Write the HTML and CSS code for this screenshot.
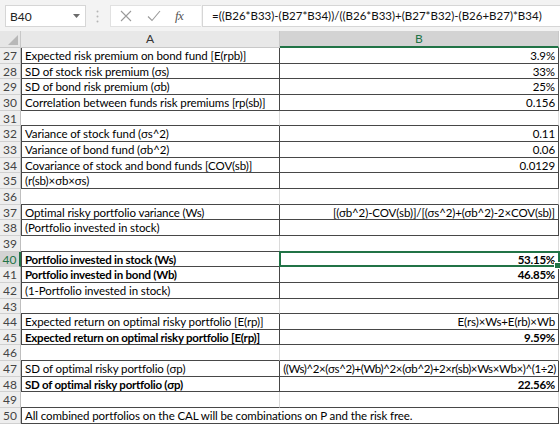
FILE: index.html
```html
<!DOCTYPE html>
<html>
<head>
<meta charset="utf-8">
<link rel="stylesheet" href="styles.css">
</head>
<body>
<div class="app">
  <div class="toolbar">
    <div class="namebox">
      <span class="ref">B40</span>
      <svg class="caret" width="7" height="4" viewBox="0 0 7 4"><path d="M0 0H7L3.5 4Z" fill="#6b6b6b"/></svg>
    </div>
    <svg class="dots" width="3" height="13" viewBox="0 0 3 13"><circle cx="1.5" cy="1.5" r="1" fill="#b5b5b5"/><circle cx="1.5" cy="6.5" r="1" fill="#b5b5b5"/><circle cx="1.5" cy="11.5" r="1" fill="#b5b5b5"/></svg>
    <div class="fxbtns">
      <svg class="btn" width="12" height="12" viewBox="0 0 12 12"><path d="M1 1L11 11M11 1L1 11" stroke="#9a9a9a" stroke-width="1.1" fill="none"/></svg>
      <svg class="btn" width="14" height="12" viewBox="0 0 14 12"><path d="M1 6.5L5 10.5L13 1" stroke="#9a9a9a" stroke-width="1.1" fill="none"/></svg>
      <span class="fx">fx</span>
    </div>
    <div class="formula">=((B26*B33)-(B27*B34))/((B26*B33)+(B27*B32)-(B26+B27)*B34)</div>
  </div>

  <div class="sheet">
    <div class="corner"><svg width="10" height="10" viewBox="0 0 10 10"><path d="M10 0V10H0Z" fill="#b8b8b8"/></svg></div>
    <div class="colh">A</div>
    <div class="colh sel">B</div>

    <div class="rh">27</div><div class="c a b">Expected risk premium on bond fund [E(rpb)]</div><div class="c v b">3.9%</div>
    <div class="rh">28</div><div class="c a b">SD of stock risk premium (σs)</div><div class="c v b">33%</div>
    <div class="rh">29</div><div class="c a b">SD of bond risk premium (σb)</div><div class="c v b">25%</div>
    <div class="rh">30</div><div class="c a b">Correlation between funds risk premiums [rp(sb)]</div><div class="c v b">0.156</div>
    <div class="rh">31</div><div class="c a"></div><div class="c v"></div>
    <div class="rh">32</div><div class="c a b">Variance of stock fund (σs^2)</div><div class="c v b">0.11</div>
    <div class="rh">33</div><div class="c a b">Variance of bond fund (σb^2)</div><div class="c v b">0.06</div>
    <div class="rh">34</div><div class="c a b">Covariance of stock and bond funds [COV(sb)]</div><div class="c v b">0.0129</div>
    <div class="rh">35</div><div class="c a b">(r(sb)×σb×σs)</div><div class="c v b"></div>
    <div class="rh">36</div><div class="c a"></div><div class="c v"></div>
    <div class="rh">37</div><div class="c a b">Optimal risky portfolio variance (Ws)</div><div class="c v b">[(σb^2)-COV(sb)]/[(σs^2)+(σb^2)-2×COV(sb)]</div>
    <div class="rh">38</div><div class="c a b">(Portfolio invested in stock)</div><div class="c v b"></div>
    <div class="rh">39</div><div class="c a"></div><div class="c v"></div>
    <div class="rh rsel">40</div><div class="c a b bold asel">Portfolio invested in stock (Ws)</div><div class="c v b bold active">53.15%</div>
    <div class="rh">41</div><div class="c a b bold">Portfolio invested in bond (Wb)</div><div class="c v b bold">46.85%</div>
    <div class="rh">42</div><div class="c a b">(1-Portfolio invested in stock)</div><div class="c v b"></div>
    <div class="rh">43</div><div class="c a"></div><div class="c v"></div>
    <div class="rh">44</div><div class="c a b">Expected return on optimal risky portfolio [E(rp)]</div><div class="c v b">E(rs)×Ws+E(rb)×Wb</div>
    <div class="rh">45</div><div class="c a b bold">Expected return on optimal risky portfolio [E(rp)]</div><div class="c v b bold">9.59%</div>
    <div class="rh">46</div><div class="c a"></div><div class="c v"></div>
    <div class="rh">47</div><div class="c a b">SD of optimal risky portfolio (σp)</div><div class="c v b tight">((Ws)^2×(σs^2)+(Wb)^2×(σb^2)+2×r(sb)×Ws×Wb×)^(1÷2)</div>
    <div class="rh">48</div><div class="c a b bold">SD of optimal risky portfolio (σp)</div><div class="c v b bold">22.56%</div>
    <div class="rh">49</div><div class="c a"></div><div class="c v"></div>
    <div class="rh">50</div><div class="c a b span">All combined portfolios on the CAL will be combinations on P and the risk free.</div>
  </div>
</div>
</body>
</html>
```

FILE: styles.css
```css
* { box-sizing: border-box; }
html, body { margin: 0; padding: 0; background: #ffffff; }
body { font-family: Lato, "Open Sans", sans-serif; color: #000; }
.app { width: 560px; height: 425px; overflow: hidden; }

.toolbar {
  height: 31px;
  background: #f3f3f3;
  display: flex;
  align-items: flex-start;
  padding-top: 5px;
  padding-left: 5px;
}
.namebox {
  width: 81px;
  height: 22px;
  background: #fff;
  border: 1px solid #d6d6d6;
  display: flex;
  align-items: center;
  justify-content: space-between;
  padding: 0 5px 0 4px;
  font-size: 12px;
  color: #222;
}
.dots { margin: 5px 0 0 10px; }
.fxbtns {
  margin-left: 11px;
  width: 91px;
  height: 22px;
  background: #fff;
  border: 1px solid #e1e1e1;
  border-right: none;
  display: flex;
  align-items: center;
  padding-left: 9px;
  gap: 15px;
}
.fx {
  font-family: "Liberation Serif", serif;
  font-style: italic;
  font-size: 13px;
  color: #555;
  letter-spacing: -0.5px;
  margin-left: -1px;
}
.formula {
  flex: 1;
  height: 22px;
  margin-left: 1px;
  background: #fff;
  border: 1px solid #d6d6d6;
  border-right: none;
  font-size: 11.5px;
  line-height: 20px;
  padding-left: 9px;
  color: #111;
  white-space: nowrap;
  letter-spacing: 0;
}

.sheet {
  display: grid;
  grid-template-columns: 21px 259px 279px;
  grid-template-rows: 17px;
  grid-auto-rows: 15.667px;
}
.corner {
  background: #e6e6e6;
  border-right: 1px solid #c8c8c8;
  border-bottom: 1px solid #c8c8c8;
  display: flex;
  align-items: flex-end;
  justify-content: flex-end;
  padding: 0 2px 2px 0;
}
.colh {
  background: #e8e8e8;
  border-right: 1px solid #c8c8c8;
  border-bottom: 1px solid #c8c8c8;
  text-align: center;
  font-size: 12px;
  line-height: 16px;
  color: #333;
}
.colh.sel {
  background: #d3d3d3;
  color: #217346;
  border-bottom: 2px solid #217346;
  line-height: 15px;
}
.rh {
  background: #eeeeee;
  border-right: 1px solid #bfbfbf;
  border-bottom: 1px solid #d0d0d0;
  font-size: 12px;
  line-height: 15px;
  text-align: center;
  color: #444;
}
.rh.rsel {
  background: #d3d3d3;
  color: #217346;
  border-right: 2px solid #217346;
}
.c {
  border-bottom: 1px solid #474747;
  border-right: 1px solid #dadada;
  font-size: 11.5px;
  line-height: 15px;
  white-space: nowrap;
  overflow: hidden;
  padding: 0 3px;
  letter-spacing: -0.1px;
}
.c.a.b { border-left: 1px solid #474747; border-right: 1px solid #474747; }
.c.v.b { border-right: 1px solid #474747; }
.c.v { text-align: right; }
.c.tight { letter-spacing: -0.38px; padding: 0 2px; }
.c.span { grid-column: span 2; overflow: visible; }
.bold { font-weight: bold; letter-spacing: -0.25px; }
.active { position: relative; overflow: visible; }
.active::after {
  content: "";
  position: absolute;
  left: -1px; top: -1px; right: -2px; bottom: -1px;
  border: 2px solid #217346;
}
.active::before {
  content: "";
  position: absolute;
  right: -3px; bottom: -3px;
  width: 5px; height: 5px;
  background: #217346;
  border: 1px solid #fff;
  z-index: 2;
}
```
